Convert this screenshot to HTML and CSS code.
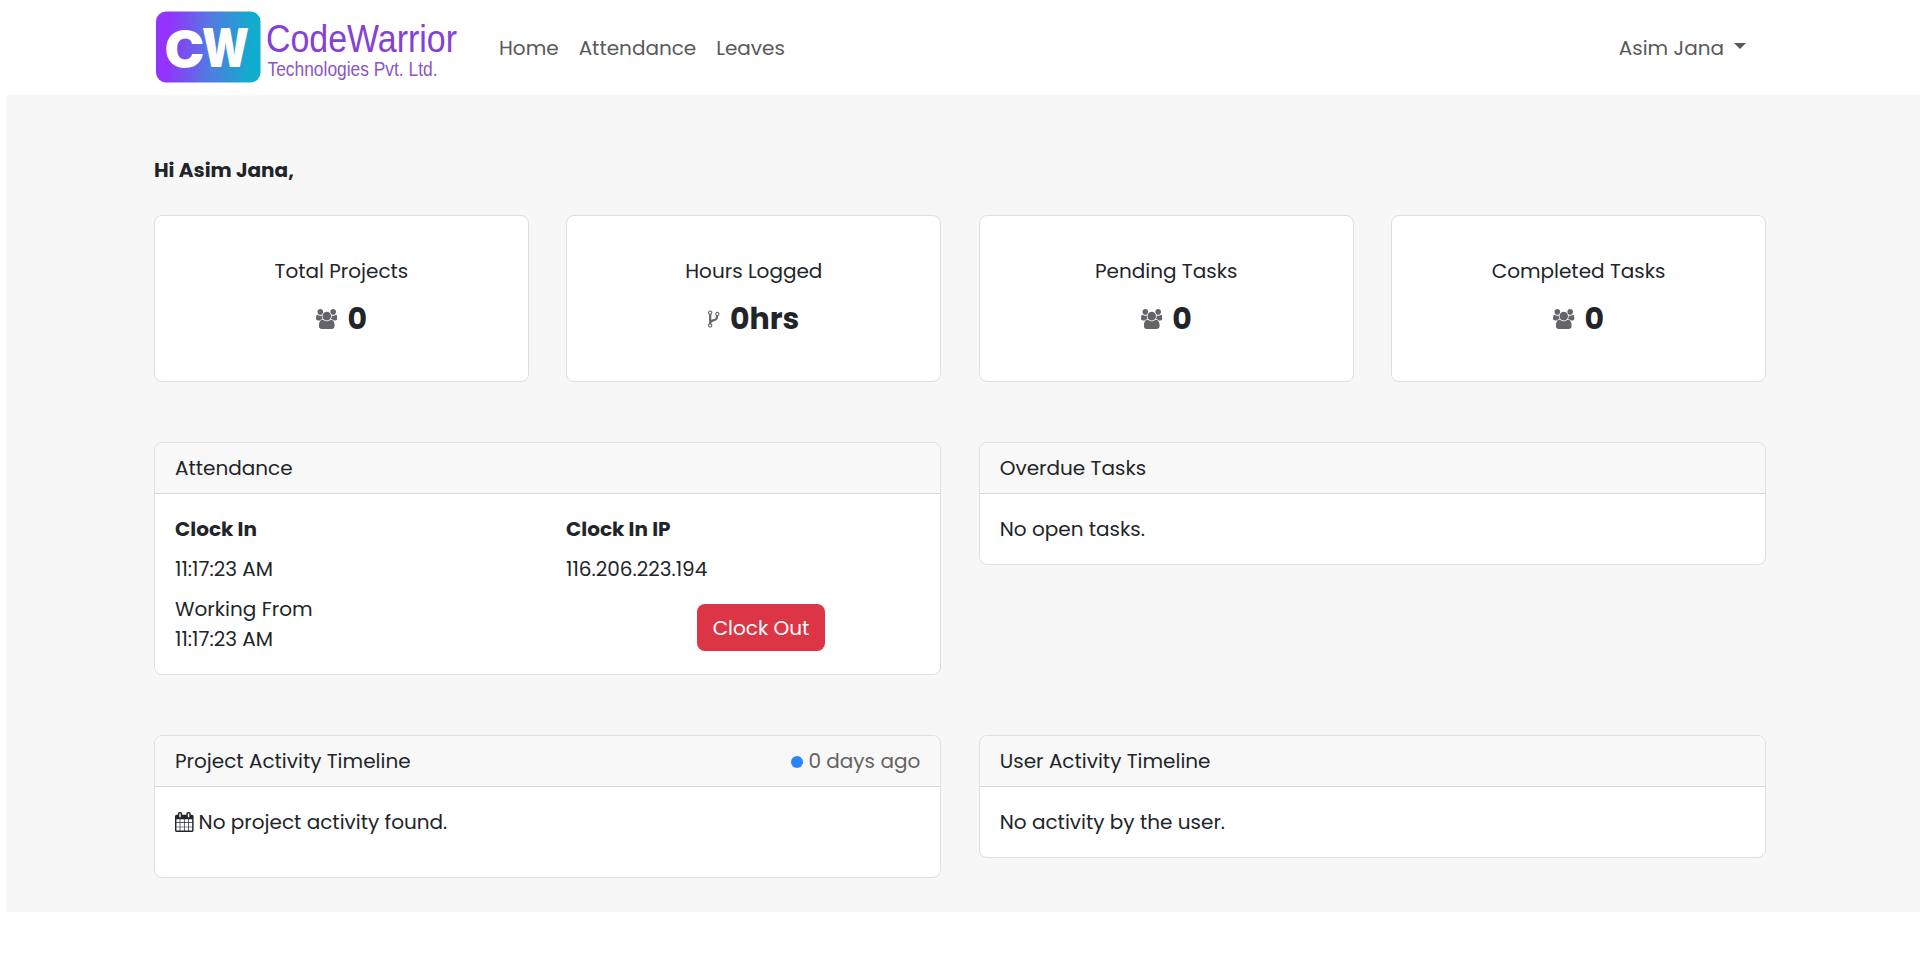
FILE: index.html
```html
<!DOCTYPE html>
<html lang="en">
<head>
  <meta charset="UTF-8" />
  <meta name="viewport" content="width=device-width, initial-scale=1" />
  <title>CodeWarrior Technologies</title>
  <link rel="stylesheet" href="styles.css">
</head>
<body>

  <!-- shared icons -->
  <svg class="sprite" aria-hidden="true">
    <symbol id="icon-users" viewBox="64 0 1920 1792">
      <path d="M657 896q-162 5-265 128h-134q-82 0-138-40.500t-56-118.500q0-353 124-353 6 0 43.500 21t97.500 42.500 119 21.500q67 0 133-23-5 37-5 66 0 139 81 256zm1071 637q0 120-73 189.500t-194 69.500h-874q-121 0-194-69.500t-73-189.500q0-53 3.500-103.500t14-109 26.500-108.500 43-97.500 62-81 85.500-53.500 111.500-20q10 0 43 21.500t73 48 107 48 135 21.500 135-21.500 107-48 73-48 43-21.500q61 0 111.500 20t85.500 53.500 62 81 43 97.500 26.500 108.500 14 109 3.500 103.500zm-1024-1277q0 106-75 181t-181 75-181-75-75-181 75-181 181-75 181 75 75 181zm704 384q0 159-112.500 271.500t-271.500 112.500-271.500-112.500-112.500-271.500 112.500-271.500 271.500-112.500 271.500 112.500 112.500 271.500zm576 225q0 78-56 118.500t-138 40.500h-134q-103-123-265-128 81-117 81-256 0-29-5-66 66 23 133 23 59 0 119-21.500t97.500-42.500 43.500-21q124 0 124 353zm-128-609q0 106-75 181t-181 75-181-75-75-181 75-181 181-75 181 75 75 181z"/>
    </symbol>
  </svg>

  <nav class="navbar">
    <svg class="logo" viewBox="0 0 306 95">
      <defs>
        <linearGradient id="badge" gradientUnits="userSpaceOnUse" x1="2" y1="44" x2="106" y2="50">
          <stop offset="0.12" stop-color="#9333fb"/>
          <stop offset="0.5" stop-color="#5578e2"/>
          <stop offset="0.92" stop-color="#10adce"/>
        </linearGradient>
      </defs>
      <rect x="2" y="11.500" width="104.500" height="71" rx="10" fill="url(#badge)"/>
      <text class="logo-mark logo-c" x="10.500" y="66.500" textLength="40" lengthAdjust="spacingAndGlyphs">C</text>
      <text class="logo-mark" x="48" y="67" textLength="47" lengthAdjust="spacingAndGlyphs">W</text>
      <text class="logo-name" x="112" y="51.500" textLength="191" lengthAdjust="spacingAndGlyphs">CodeWarrior</text>
      <text class="logo-sub" x="113.500" y="76" textLength="170" lengthAdjust="spacingAndGlyphs">Technologies Pvt. Ltd.</text>
    </svg>
    <ul class="nav-links">
      <li><a href="#">Home</a></li>
      <li><a href="#">Attendance</a></li>
      <li><a href="#">Leaves</a></li>
    </ul>
    <a class="user-menu" href="#">Asim Jana <span class="caret"></span></a>
  </nav>

  <main>
    <p class="greeting">Hi Asim Jana,</p>

    <section class="stats">
      <div class="card stat">
        <p>Total Projects</p>
        <h3><svg class="icon-users"><use href="#icon-users"/></svg>0</h3>
      </div>
      <div class="card stat">
        <p>Hours Logged</p>
        <h3>
          <svg class="icon-fork" viewBox="384 0 1024 1792"><path d="M672 1472q0-40-28-68t-68-28-68 28-28 68 28 68 68 28 68-28 28-68zm0-1152q0-40-28-68t-68-28-68 28-28 68 28 68 68 28 68-28 28-68zm640 128q0-40-28-68t-68-28-68 28-28 68 28 68 68 28 68-28 28-68zm96 0q0 52-26 96.500t-70 69.500q-2 287-226 414-67 38-203 81-128 40-169.500 71t-41.500 100v26q44 25 70 69.500t26 96.500q0 80-56 136t-136 56-136-56-56-136q0-52 26-96.500t70-69.500v-820q-44-25-70-69.500t-26-96.500q0-80 56-136t136-56 136 56 56 136q0 52-26 96.500t-70 69.500v497q54-26 154-57 55-17 87.500-29.500t70.500-31 59-39.500 40.500-51 28-69.500 8.500-91.500q-44-25-70-69.500t-26-96.500q0-80 56-136t136-56 136 56 56 136z"/></svg>0hrs
        </h3>
      </div>
      <div class="card stat">
        <p>Pending Tasks</p>
        <h3><svg class="icon-users"><use href="#icon-users"/></svg>0</h3>
      </div>
      <div class="card stat">
        <p>Completed Tasks</p>
        <h3><svg class="icon-users"><use href="#icon-users"/></svg>0</h3>
      </div>
    </section>

    <section class="panels">
      <div class="card">
        <div class="card-header">Attendance</div>
        <div class="card-body attendance">
          <div>
            <p><b>Clock In</b></p>
            <p>11:17:23 AM</p>
            <p class="last">Working From<br>11:17:23 AM</p>
          </div>
          <div>
            <p><b>Clock In IP</b></p>
            <p>116.206.223.194</p>
            <button class="btn-danger">Clock Out</button>
          </div>
        </div>
      </div>
      <div class="card">
        <div class="card-header">Overdue Tasks</div>
        <div class="card-body">No open tasks.</div>
      </div>
    </section>

    <section class="panels">
      <div class="card">
        <div class="card-header">
          <span>Project Activity Timeline</span>
          <span class="ago"><i class="dot"></i>0 days ago</span>
        </div>
        <div class="card-body">
          <p class="activity">
            <svg class="icon-calendar" viewBox="64 0 1664 1792"><path d="M192 1664h288v-288h-288v288zm352 0h320v-288h-320v288zm-352-352h288v-320h-288v320zm352 0h320v-320h-320v320zm-352-384h288v-288h-288v288zm736 736h320v-288h-320v288zm-384-736h320v-288h-320v288zm768 736h288v-288h-288v288zm-384-352h320v-320h-320v320zm-352-864v-288q0-13-9.500-22.500t-22.500-9.500h-64q-13 0-22.500 9.500t-9.500 22.500v288q0 13 9.500 22.500t22.500 9.500h64q13 0 22.500-9.500t9.500-22.500zm736 864h288v-320h-288v320zm-384-384h320v-288h-320v288zm384 0h288v-288h-288v288zm32-480v-288q0-13-9.500-22.500t-22.500-9.500h-64q-13 0-22.500 9.500t-9.500 22.500v288q0 13 9.500 22.500t22.500 9.500h64q13 0 22.500-9.500t9.500-22.500zm384-64v1280q0 52-38 90t-90 38h-1408q-52 0-90-38t-38-90v-1280q0-52 38-90t90-38h128v-96q0-66 47-113t113-47h64q66 0 113 47t47 113v96h384v-96q0-66 47-113t113-47h64q66 0 113 47t47 113v96h128q52 0 90 38t38 90z"/></svg>
            No project activity found.
          </p>
        </div>
      </div>
      <div class="card">
        <div class="card-header">User Activity Timeline</div>
        <div class="card-body">No activity by the user.</div>
      </div>
    </section>
  </main>

</body>
</html>
```
FILE: styles.css
```css
* {
  box-sizing: border-box;
}

body {
  margin: 0;
  font-family: Poppins, Inter, sans-serif;
  font-size: 20px;
  line-height: 30px;
  color: #212529;
  background: #fff;
}

p, h3, ul {
  margin: 0;
  padding: 0;
}

.sprite {
  display: none;
}

/* navbar */
.navbar {
  display: flex;
  align-items: center;
  height: 95px;
  padding: 0 174px 0 154px;
}

.logo {
  width: 306px;
  height: 95px;
  overflow: visible;
}

.logo-mark {
  font: 900 53px Inter, sans-serif;
  fill: #fff;
}

.logo-c {
  font-size: 50px;
}

.logo-name {
  font: 38px "Liberation Sans", Arial, sans-serif;
  fill: #8540d8;
}

.logo-sub {
  font: 19.5px "Liberation Sans", Arial, sans-serif;
  fill: #8a55c8;
}

.nav-links {
  display: flex;
  gap: 20px;
  margin-left: 39px;
  list-style: none;
}

.navbar a {
  color: #595959;
  text-decoration: none;
}

.user-menu {
  display: flex;
  align-items: center;
  margin-left: auto;
}

.caret {
  margin: -3px 0 0 10px;
  border-top: 6px solid #595959;
  border-left: 6px solid transparent;
  border-right: 6px solid transparent;
}

/* page */
main {
  margin-left: 6px;
  padding: 60px 154px 34px 148px;
  background: #f7f7f7;
}

.greeting {
  margin-bottom: 30px;
  font-weight: 700;
}

.card {
  background: #fff;
  border: 1px solid #dfdfdf;
  border-radius: 8px;
}

.stats {
  display: grid;
  grid-template-columns: repeat(4, 1fr);
  gap: 37.5px;
}

.stat {
  height: 167px;
  padding-top: 40px;
  text-align: center;
}

.stat h3 {
  display: flex;
  justify-content: center;
  align-items: center;
  gap: 10px;
  margin-top: 15px;
  font-size: 30px;
  line-height: 36px;
}

.stat svg {
  height: 20px;
  fill: #636569;
}

.icon-users {
  width: 21.5px;
}

.icon-fork {
  width: 11.5px;
}

.panels {
  display: grid;
  grid-template-columns: 1fr 1fr;
  align-items: start;
  gap: 37.5px;
  margin-top: 60px;
}

.card-header {
  display: flex;
  justify-content: space-between;
  padding: 10px 20px;
  background: #f8f8f8;
  border-bottom: 1px solid #d8d8d8;
  border-radius: 7px 7px 0 0;
}

.card-body {
  padding: 20px;
}

.attendance {
  display: grid;
  grid-template-columns: 391px 1fr;
}

.attendance p {
  margin-bottom: 10px;
}

.attendance .last {
  margin-bottom: 0;
}

.btn-danger {
  display: block;
  width: 128px;
  height: 47px;
  margin: 20px 0 0 131px;
  padding: 0;
  border: 0;
  border-radius: 8px;
  background: #dc3545;
  color: #fff;
  font: inherit;
}

.ago {
  color: #636363;
}

.dot {
  display: inline-block;
  width: 12px;
  height: 12px;
  margin-right: 5px;
  border-radius: 50%;
  background: #2b85fa;
}

.activity {
  display: flex;
  align-items: center;
  gap: 5px;
  margin-bottom: 20px;
}

.icon-calendar {
  width: 18.6px;
  height: 20px;
  fill: #212529;
}
```
